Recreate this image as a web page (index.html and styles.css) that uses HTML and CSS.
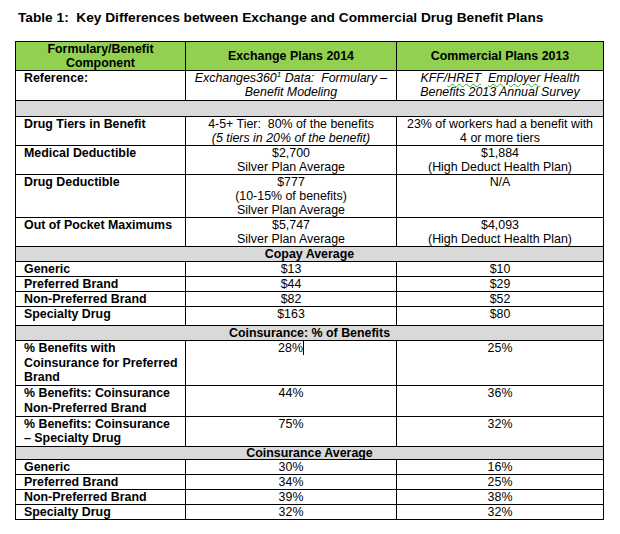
FILE: index.html
```html
<!DOCTYPE html>
<html>
<head>
<meta charset="utf-8">
<link rel="stylesheet" href="styles.css">
</head>
<body>
<h1 class="title">Table 1:&nbsp; Key Differences between Exchange and Commercial Drug Benefit Plans</h1>
<table class="plans">
  <colgroup><col class="c1"><col class="c2"><col class="c3"></colgroup>
  <thead>
    <tr class="head">
      <th>Formulary/Benefit<br>Component</th>
      <th>Exchange Plans 2014</th>
      <th>Commercial Plans 2013</th>
    </tr>
  </thead>
  <tbody>
    <tr class="ref">
      <td class="label">Reference:</td>
      <td class="it">Exchanges360<sup>1</sup> Data:&nbsp; Formulary –<br>Benefit Modeling</td>
      <td class="it">KFF/<span class="sp">HRET</span>&nbsp; <span class="sp">Employer</span> Health<br>Benefits 2013 Annual Survey</td>
    </tr>
    <tr class="section blank"><td colspan="3"></td></tr>
    <tr>
      <td class="label">Drug Tiers in Benefit</td>
      <td>4-5+ Tier:&nbsp; 80% of the benefits<br><span class="it">(5 tiers in 20% of the benefit)</span></td>
      <td>23% of workers had a benefit with<br>4 or more tiers</td>
    </tr>
    <tr>
      <td class="label">Medical Deductible</td>
      <td>$2,700<br>Silver Plan Average</td>
      <td>$1,884<br>(High Deduct Health Plan)</td>
    </tr>
    <tr>
      <td class="label">Drug Deductible</td>
      <td>$777<br>(10-15% of benefits)<br>Silver Plan Average</td>
      <td>N/A</td>
    </tr>
    <tr>
      <td class="label">Out of Pocket Maximums</td>
      <td>$5,747<br>Silver Plan Average</td>
      <td>$4,093<br>(High Deduct Health Plan)</td>
    </tr>
    <tr class="section"><td colspan="3">Copay Average</td></tr>
    <tr><td class="label">Generic</td><td>$13</td><td>$10</td></tr>
    <tr><td class="label">Preferred Brand</td><td>$44</td><td>$29</td></tr>
    <tr><td class="label">Non-Preferred Brand</td><td>$82</td><td>$52</td></tr>
    <tr class="tall"><td class="label">Specialty Drug</td><td>$163</td><td>$80</td></tr>
    <tr class="section"><td colspan="3">Coinsurance: % of Benefits</td></tr>
    <tr class="loose">
      <td class="label">% Benefits with<br>Coinsurance for Preferred<br>Brand</td>
      <td><span class="caret">28%</span></td>
      <td>25%</td>
    </tr>
    <tr class="loose">
      <td class="label">% Benefits: Coinsurance<br>Non-Preferred Brand</td>
      <td>44%</td>
      <td>36%</td>
    </tr>
    <tr class="loose">
      <td class="label">% Benefits: Coinsurance<br>– Specialty Drug</td>
      <td>75%</td>
      <td>32%</td>
    </tr>
    <tr class="section short"><td colspan="3">Coinsurance Average</td></tr>
    <tr><td class="label">Generic</td><td>30%</td><td>16%</td></tr>
    <tr><td class="label">Preferred Brand</td><td>34%</td><td>25%</td></tr>
    <tr><td class="label">Non-Preferred Brand</td><td>39%</td><td>38%</td></tr>
    <tr><td class="label">Specialty Drug</td><td>32%</td><td>32%</td></tr>
  </tbody>
</table>
</body>
</html>
```
FILE: styles.css
```css
body {
  margin: 0;
  background: #fff;
  color: #000;
  font-family: "Liberation Sans", Arial, sans-serif;
}
.title {
  margin: 10px 0 0 18px;
  font-size: 13.7px;
  line-height: 15px;
  font-weight: bold;
}
.plans {
  margin: 16px 0 0 15px;
  width: 588px;
  table-layout: fixed;
  border-collapse: collapse;
  border: 1.5px solid #000;
  font-size: 12.4px;
  line-height: 14px;
}
.c1 { width: 170px; }
.c2 { width: 211px; }
.c3 { width: 207px; }
.plans th,
.plans td {
  border: 1px solid #000;
  padding: 0;
  vertical-align: top;
  text-align: center;
  white-space: nowrap;
}
.head th {
  background: #92d050;
  vertical-align: middle;
  font-weight: bold;
}
.label {
  text-align: left !important;
  font-weight: bold;
  padding-left: 8px !important;
}
.it { font-style: italic; }
.it sup {
  font-size: 8px;
  line-height: 0;
  vertical-align: 5px;
}
.sp {
  text-decoration: underline wavy #3aa83a;
  text-decoration-thickness: 1px;
  text-underline-offset: 1px;
}
.section td {
  background: #d9d9d9;
  font-weight: bold;
}
.ref td { padding-bottom: 1px; }
.blank td { height: 15px; }
.tall td { height: 18px; }
.loose td { line-height: 14.7px; }
.short td { line-height: 12px; }
.caret {
  border-right: 1px solid #000;
}
```
